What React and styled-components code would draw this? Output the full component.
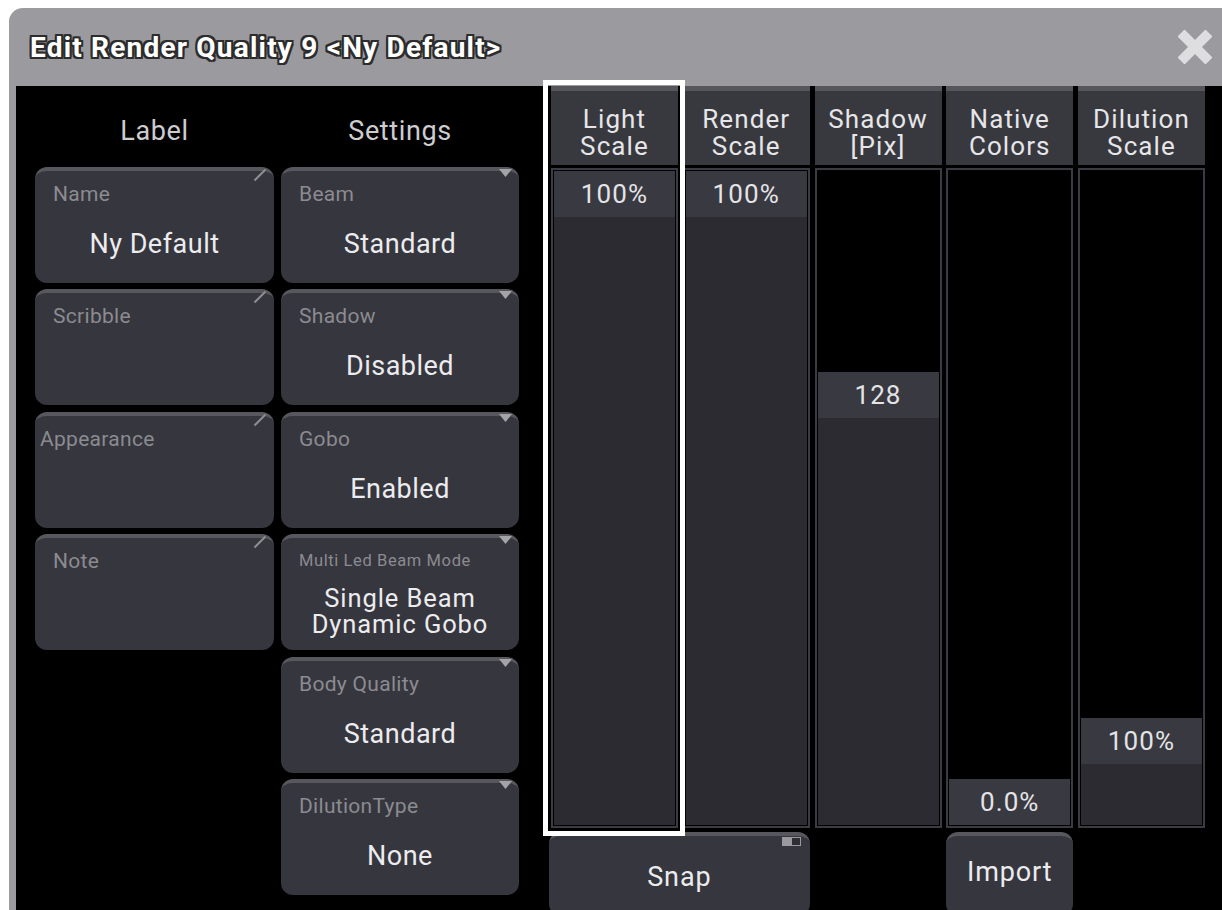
import React from "react";
import styled, { createGlobalStyle } from "styled-components";

const GlobalStyle = createGlobalStyle`
  html, body {
    margin: 0;
    padding: 0;
    background: #fff;
    overflow: hidden;
  }
  body {
    font-family: Roboto, "Noto Sans", "DejaVu Sans", sans-serif;
  }
`;

const labels = [
  { caption: "Name", value: "Ny Default" },
  { caption: "Scribble" },
  { caption: "Appearance", indent: 5 },
  { caption: "Note" },
];

const settings = [
  { caption: "Beam", value: "Standard" },
  { caption: "Shadow", value: "Disabled" },
  { caption: "Gobo", value: "Enabled" },
  { caption: "Multi Led Beam Mode", small: true, value: ["Single Beam", "Dynamic Gobo"] },
  { caption: "Body Quality", value: "Standard" },
  { caption: "DilutionType", value: "None" },
];

const faders = [
  { title: ["Light", "Scale"], value: "100%", pos: 0, selected: true },
  { title: ["Render", "Scale"], value: "100%", pos: 0 },
  { title: ["Shadow", "[Pix]"], value: "128", pos: 0.331 },
  { title: ["Native", "Colors"], value: "0.0%", pos: 1 },
  { title: ["Dilution", "Scale"], value: "100%", pos: 0.9 },
];

const TRAVEL = 608;

function PencilMark() {
  return (
    <CornerMark width="14" height="14" viewBox="0 0 14 14">
      <line x1="1.5" y1="12.5" x2="12.5" y2="1.5" stroke="#8e8e92" strokeWidth="2" />
    </CornerMark>
  );
}

function DropMark() {
  return (
    <CornerMark width="13" height="9" viewBox="0 0 13 9" $drop>
      <polygon points="0,0 13,0 6.5,8" fill="#a4a4a8" />
    </CornerMark>
  );
}

function Tile({ caption, value, indent, small, mark }) {
  const lines = Array.isArray(value) ? value : value ? [value] : [];
  return (
    <TileBox>
      {mark === "edit" ? <PencilMark /> : <DropMark />}
      <Caption $indent={indent} $small={small}>
        {caption}
      </Caption>
      <ValueArea>
        {lines.map((line) => (
          <ValueLine key={line} $multi={lines.length > 1}>
            {line}
          </ValueLine>
        ))}
      </ValueArea>
    </TileBox>
  );
}

function Fader({ title, value, pos, selected }) {
  return (
    <FaderColumn>
      {selected && <Highlight />}
      <FaderHeader>
        {title.map((t) => (
          <span key={t}>{t}</span>
        ))}
      </FaderHeader>
      <Track>
        <Gap $h={Math.round(pos * TRAVEL)} />
        <Handle>{value}</Handle>
        <Fill />
      </Track>
    </FaderColumn>
  );
}

export default function App() {
  return (
    <>
      <GlobalStyle />
      <Window>
        <TitleBar>
          <Title>Edit Render Quality 9 &lt;Ny Default&gt;</Title>
          <CloseIcon width="34" height="34" viewBox="0 0 34 34">
            <g stroke="#dedee0" strokeWidth="10">
              <line x1="3" y1="3" x2="31" y2="31" />
              <line x1="31" y1="3" x2="3" y2="31" />
            </g>
          </CloseIcon>
        </TitleBar>
        <Body>
          <Column $w={239}>
            <ColumnHead>Label</ColumnHead>
            <Stack>
              {labels.map((l) => (
                <Tile key={l.caption} {...l} mark="edit" />
              ))}
            </Stack>
          </Column>
          <Column $w={238}>
            <ColumnHead>Settings</ColumnHead>
            <Stack>
              {settings.map((s) => (
                <Tile key={s.caption} {...s} mark="drop" />
              ))}
            </Stack>
          </Column>
          <FaderPane>
            <FaderGrid>
              {faders.map((f) => (
                <Fader key={f.title.join()} {...f} />
              ))}
            </FaderGrid>
            <ButtonRow>
              <PaneButton $span={2} $offset={-2}>
                <Toggle />
                Snap
              </PaneButton>
              <PaneButton $start={4} $pad={20}>
                Import
              </PaneButton>
            </ButtonRow>
          </FaderPane>
        </Body>
      </Window>
    </>
  );
}

const Window = styled.div`
  margin: 8px 0 0 9px;
  height: 902px;
  background: #9a9a9f;
  border-top-left-radius: 14px;
  display: flex;
  flex-direction: column;
  overflow: hidden;
`;

const TitleBar = styled.div`
  height: 78px;
  flex: none;
  display: flex;
  align-items: center;
  justify-content: space-between;
  padding: 0 10px 0 21px;
`;

const Title = styled.div`
  font-family: Roboto, "Liberation Sans", sans-serif;
  font-weight: 700;
  font-size: 28px;
  letter-spacing: 1.2px;
  color: #fff;
  text-shadow: -2px -2px 0 #2c2c2c, 2px -2px 0 #2c2c2c, -2px 2px 0 #2c2c2c,
    2px 2px 0 #2c2c2c, 0 2px 0 #2c2c2c, 0 -2px 0 #2c2c2c, 2px 0 0 #2c2c2c,
    -2px 0 0 #2c2c2c;
`;

const CloseIcon = styled.svg`
  display: block;
`;

const Body = styled.div`
  flex: 1;
  background: #000;
  margin-left: 7px;
  padding-left: 19px;
  display: flex;
  gap: 7px;
`;

const Column = styled.div`
  width: ${({ $w }) => $w}px;
  display: flex;
  flex-direction: column;
`;

const ColumnHead = styled.div`
  height: 81px;
  box-sizing: border-box;
  padding-top: 9px;
  display: flex;
  align-items: center;
  justify-content: center;
  font-size: 27px;
  letter-spacing: 0.6px;
  color: #cdcdcf;
`;

const Stack = styled.div`
  display: flex;
  flex-direction: column;
  gap: 6.4px;
`;

const TileBox = styled.div`
  position: relative;
  box-sizing: border-box;
  height: 116px;
  background: #36363e;
  border-top: 4px solid #57575d;
  border-radius: 12px;
  display: flex;
  flex-direction: column;
`;

const CornerMark = styled.svg`
  position: absolute;
  top: ${({ $drop }) => ($drop ? "-2px" : "-3px")};
  right: 7px;
`;

const Caption = styled.div`
  height: 22px;
  margin-top: 12px;
  padding-left: ${({ $indent }) => ($indent ?? 18)}px;
  font-size: ${({ $small }) => ($small ? "16.5px" : "21px")};
  letter-spacing: ${({ $small }) => ($small ? "0.6px" : "0.3px")};
  line-height: 22px;
  color: #8b8b90;
  white-space: nowrap;
`;

const ValueArea = styled.div`
  flex: 1;
  display: flex;
  flex-direction: column;
  align-items: center;
  justify-content: center;
`;

const ValueLine = styled.div`
  font-size: ${({ $multi }) => ($multi ? "25.5px" : "27px")};
  letter-spacing: ${({ $multi }) => ($multi ? "0.9px" : "0.5px")};
  line-height: 26px;
  color: #ececee;
`;

const FaderPane = styled.div`
  margin-left: 25px;
  display: flex;
  flex-direction: column;
`;

const FaderGrid = styled.div`
  display: grid;
  grid-template-columns: repeat(5, 127px);
  column-gap: 4.75px;
`;

const FaderColumn = styled.div`
  position: relative;
  display: flex;
  flex-direction: column;
`;

const Highlight = styled.div`
  position: absolute;
  top: -6px;
  left: -8px;
  right: -7px;
  bottom: -8px;
  border: 5px solid #fff;
  pointer-events: none;
  z-index: 2;
`;

const FaderHeader = styled.div`
  height: 79px;
  box-sizing: border-box;
  background: #38383f;
  border-top: 5px solid #55555b;
  padding-top: 9px;
  display: flex;
  flex-direction: column;
  align-items: center;
  justify-content: center;
  font-size: 26px;
  letter-spacing: 1.1px;
  line-height: 27px;
  color: #e6e6e8;
`;

const Track = styled.div`
  margin-top: 3px;
  height: 660px;
  box-sizing: border-box;
  border: 2px solid #3b3b43;
  padding: 1px;
  background: #000;
  display: flex;
  flex-direction: column;
`;

const Gap = styled.div`
  height: ${({ $h }) => $h}px;
  flex: none;
`;

const Handle = styled.div`
  height: 46px;
  flex: none;
  background: #393941;
  display: flex;
  align-items: center;
  justify-content: center;
  font-size: 26px;
  letter-spacing: 1.1px;
  color: #e4e4e6;
`;

const Fill = styled.div`
  flex: 1;
  background: #2b2b31;
`;

const ButtonRow = styled.div`
  margin-top: 4px;
  display: grid;
  grid-template-columns: repeat(5, 127px);
  column-gap: 4.75px;
`;

const PaneButton = styled.div`
  position: relative;
  grid-column: ${({ $start, $span }) =>
    `${$start ?? "auto"} / span ${$span ?? 1}`};
  margin-left: ${({ $offset }) => $offset ?? 0}px;
  height: 84px;
  box-sizing: border-box;
  background: #36363e;
  border-top: 4px solid #57575d;
  border-radius: 12px;
  display: flex;
  justify-content: center;
  padding-top: ${({ $pad }) => $pad ?? 25}px;
  font-size: 27px;
  letter-spacing: 0.9px;
  color: #ececee;
`;

const Toggle = styled.span`
  position: absolute;
  top: 1px;
  right: 9px;
  width: 19px;
  height: 9px;
  box-sizing: border-box;
  background: #9a9a9e;
  border: 1px solid #9a9a9e;

  &::after {
    content: "";
    position: absolute;
    top: 0;
    right: 0;
    width: 8px;
    height: 7px;
    background: #2e2e34;
  }
`;
